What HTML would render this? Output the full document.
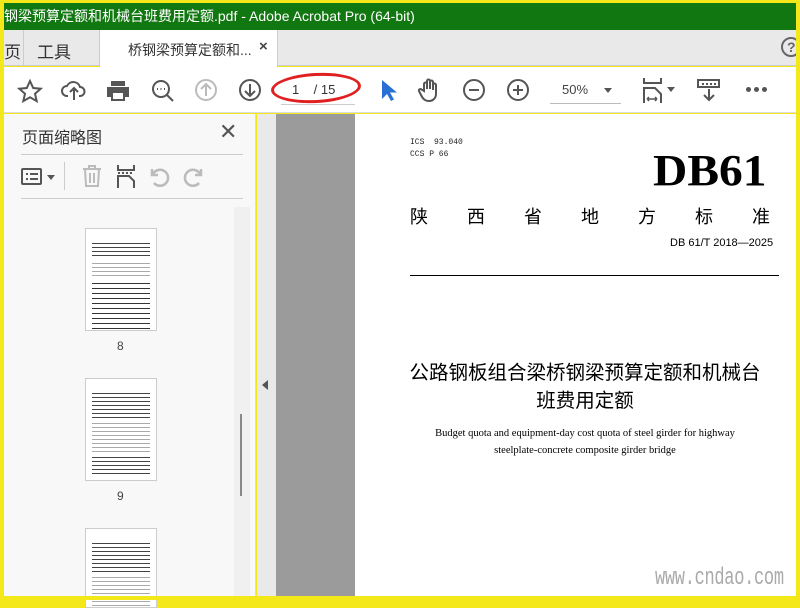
<!DOCTYPE html>
<html><head><meta charset="utf-8"><style>
*{margin:0;padding:0;box-sizing:border-box}
body{width:800px;height:600px;overflow:hidden;background:#f5e81a;position:relative;font-family:"Liberation Sans","Noto Sans CJK SC",sans-serif}
.a{position:absolute}
.ic{position:absolute;stroke:#555;fill:none;stroke-width:2}
.thumb{position:absolute;left:85px;width:72px;height:103px;background:#fff;border:1px solid #ccc}
.thumb .t{position:absolute;background:#222}
</style></head><body>
<div class="a" style="left:4px;top:3px;width:792px;height:27px;background:#117711;color:#fff;font-size:14px;line-height:27px;padding-left:0">钢梁预算定额和机械台班费用定额.pdf - Adobe Acrobat Pro (64-bit)</div>
<div class="a" style="left:4px;top:30px;width:792px;height:36px;background:#e9e9e9;border-bottom:1px solid #ccc"></div>
<div class="a" style="left:4px;top:38px;font-size:17px;color:#333">页</div>
<div class="a" style="left:23px;top:30px;width:1px;height:36px;background:#ccc"></div>
<div class="a" style="left:37px;top:38px;font-size:17px;color:#333">工具</div>
<div class="a" style="left:99px;top:30px;width:179px;height:37px;background:#fff;border-left:1px solid #ccc;border-right:1px solid #ccc"></div>
<div class="a" style="left:128px;top:40px;font-size:14px;color:#333">桥钢梁预算定额和...</div>
<div class="a" style="left:259px;top:38px;font-size:15px;color:#444;font-weight:bold">×</div>
<div class="a" style="left:781px;top:37px;width:20px;height:20px;border:2px solid #666;border-radius:50%;font-size:14px;color:#666;padding-left:4px;line-height:16px;font-weight:bold">?</div>
<div class="a" style="left:4px;top:67px;width:792px;height:46px;background:#fff;border-bottom:1px solid #ddd"></div>
<svg class="ic" style="left:17px;top:79px" width="26" height="24"><path d="M13 2l3.2 7 7.5.7-5.7 5 1.7 7.4L13 18.3 6.3 22.1 8 14.7 2.3 9.7l7.5-.7z"/></svg>
<svg class="ic" style="left:61px;top:78px" width="26" height="24"><path d="M7 18H6a5 5 0 010-10 7 7 0 0113 1 4.5 4.5 0 010 9h-1M13 22V11M9 14l4-4 4 4"/></svg>
<svg class="ic" style="left:105px;top:79px" width="26" height="24"><path fill="#555" stroke="none" d="M6 2h14v5H6zM2 8h22v10h-4v4H6v-4H2zM8 14v6h10v-6z"/></svg>
<svg class="ic" style="left:150px;top:78px" width="26" height="26"><circle cx="11" cy="11" r="8"/><path d="M17 17l6 6"/><path d="M7 11h1M10.5 11h1M14 11h1"/></svg>
<svg class="ic" style="left:194px;top:78px;stroke:#bbb" width="24" height="24"><circle cx="12" cy="12" r="10"/><path d="M12 18V6M7 11l5-5 5 5"/></svg>
<svg class="ic" style="left:238px;top:78px" width="24" height="24"><circle cx="12" cy="12" r="10"/><path d="M12 6v12M7 13l5 5 5-5"/></svg>
<div class="a" style="left:281px;top:104px;width:74px;height:1px;background:#ccc"></div>
<div class="a" style="left:271px;top:73px;width:90px;height:30px;border:3px solid #e02020;border-radius:50%;transform:rotate(-3deg)"></div>
<div class="a" style="left:292px;top:82px;font-size:13px;color:#333">1&nbsp;&nbsp;&nbsp;&nbsp;/ 15</div>
<svg class="a" style="left:379px;top:78px" width="18" height="24"><path fill="#2a6fd6" d="M3 2v19l5-5 4 7 3-1.5-4-7h7z"/></svg>
<svg class="ic" style="left:417px;top:77px" width="26" height="26"><path d="M7 14V7a1.5 1.5 0 013 0v5V4a1.5 1.5 0 013 0v8V5a1.5 1.5 0 013 0v8V8a1.5 1.5 0 013 0v9c0 4-3 7-7 7s-6-2-8-6l-2-4a1.5 1.5 0 012.5-1.5z"/></svg>
<svg class="ic" style="left:462px;top:78px" width="24" height="24"><circle cx="12" cy="12" r="10"/><path d="M7 12h10"/></svg>
<svg class="ic" style="left:506px;top:78px" width="24" height="24"><circle cx="12" cy="12" r="10"/><path d="M7 12h10M12 7v10"/></svg>
<div class="a" style="left:562px;top:82px;font-size:13px;color:#444">50%</div>
<div class="a" style="left:604px;top:88px;border:4px solid transparent;border-top:5px solid #555"></div>
<div class="a" style="left:550px;top:103px;width:71px;height:1px;background:#bbb"></div>
<svg class="ic" style="left:642px;top:77px" width="22" height="26"><path d="M2 1v5h17V1M2 26V11h11l6 6v9"/><path d="M5 22h10M5 22l2-2M5 22l2 2M15 22l-2-2M15 22l-2 2" stroke-width="1.5"/></svg>
<div class="a" style="left:667px;top:87px;border:4px solid transparent;border-top:5px solid #555"></div>
<svg class="ic" style="left:697px;top:79px" width="24" height="24"><rect x="1" y="1" width="21" height="7" fill="#fff"/><path d="M5 5h14" stroke-dasharray="2 2"/><path d="M12 10v11M7 16l5 5 5-5"/></svg>
<div class="a" style="left:746px;top:87px;width:5px;height:5px;border-radius:50%;background:#555;box-shadow:8px 0 #555,16px 0 #555"></div>
<!-- left panel -->
<div class="a" style="left:4px;top:114px;width:252px;height:486px;background:#f8f8f8;border-right:1px solid #ddd"></div>
<div class="a" style="left:22px;top:124px;font-size:16px;color:#333">页面缩略图</div>
<div class="a" style="left:219px;top:119px;font-size:22px;color:#555">✕</div>
<div class="a" style="left:21px;top:154px;width:222px;height:1px;background:#ccc"></div>
<div class="a" style="left:21px;top:198px;width:222px;height:1px;background:#ccc"></div>
<svg class="ic" style="left:21px;top:167px" width="22" height="20"><rect x="1" y="2" width="19" height="15" rx="1"/><path d="M5 7h2M9 7h8M5 12h2M9 12h8"/></svg>
<div class="a" style="left:47px;top:175px;border:4px solid transparent;border-top:5px solid #555"></div>
<div class="a" style="left:64px;top:162px;width:1px;height:28px;background:#ccc"></div>
<svg class="ic" style="left:81px;top:164px;stroke:#bbb" width="22" height="24"><path d="M2 5h18M8 5V2h6v3M4 5l1 17h12l1-17M9 9v10M13 9v10"/></svg>
<svg class="ic" style="left:115px;top:164px" width="22" height="24"><path d="M3 1v5h16V1M3 24V12h11l5 5v7" /><path d="M3 9h16" stroke-dasharray="2 2"/></svg>
<svg class="ic" style="left:148px;top:165px;stroke:#bbb;stroke-width:2.5" width="24" height="24"><path d="M6 18a8 8 0 10-1-9M4 4v6h6"/></svg>
<svg class="ic" style="left:181px;top:165px;stroke:#bbb;stroke-width:2.5" width="24" height="24"><path d="M18 18a8 8 0 111-9M20 4v6h-6"/></svg>
<div class="a" style="left:234px;top:207px;width:16px;height:393px;background:#f0f0f0"></div>
<div class="a" style="left:240px;top:414px;width:2px;height:82px;background:#888"></div>
<div class="thumb" style="top:228px"><div class="t" style="left:6px;top:14px;width:58px;height:16px;background:repeating-linear-gradient(#444 0 1px,#fff 1px 4px)"></div><div class="t" style="left:6px;top:34px;width:58px;height:14px;background:repeating-linear-gradient(#aaa 0 1px,#fff 1px 4px)"></div><div class="t" style="left:6px;top:54px;width:58px;height:46px;background:repeating-linear-gradient(#333 0 1px,#fff 1px 5px)"></div></div>
<div class="a" style="left:117px;top:339px;font-size:12px;color:#444">8</div>
<div class="thumb" style="top:378px"><div class="t" style="left:6px;top:14px;width:58px;height:26px;background:repeating-linear-gradient(#444 0 1px,#fff 1px 4px)"></div><div class="t" style="left:6px;top:44px;width:58px;height:30px;background:repeating-linear-gradient(#aaa 0 1px,#fff 1px 4px)"></div><div class="t" style="left:6px;top:78px;width:58px;height:18px;background:repeating-linear-gradient(#444 0 1px,#fff 1px 4px)"></div></div>
<div class="a" style="left:117px;top:489px;font-size:12px;color:#444">9</div>
<div class="thumb" style="top:528px;height:80px"><div class="t" style="left:6px;top:14px;width:58px;height:30px;background:repeating-linear-gradient(#444 0 1px,#fff 1px 4px)"></div><div class="t" style="left:6px;top:48px;width:58px;height:30px;background:repeating-linear-gradient(#aaa 0 1px,#fff 1px 4px)"></div></div>
<!-- viewer -->
<div class="a" style="left:257px;top:114px;width:19px;height:486px;background:#e9e9e9"></div>
<div class="a" style="left:262px;top:380px;border:5px solid transparent;border-right:6px solid #555;border-left:0"></div>
<div class="a" style="left:276px;top:114px;width:79px;height:486px;background:#9b9b9b"></div>
<div class="a" style="left:355px;top:114px;width:441px;height:482px;background:#fff"></div>
<div class="a" style="left:410px;top:137px;font-size:8px;font-family:'Liberation Mono',monospace;color:#222;line-height:12px">ICS&nbsp; 93.040<br>CCS P 66</div>
<div class="a" style="left:653px;top:145px;font-size:44px;font-weight:bold;font-family:'Liberation Serif',serif;color:#000;line-height:52px;transform:scaleX(1.08);transform-origin:left">DB61</div>
<div class="a" style="left:410px;top:203px;width:360px;display:flex;justify-content:space-between;font-size:18px;color:#000"><span>陕</span><span>西</span><span>省</span><span>地</span><span>方</span><span>标</span><span>准</span></div>
<div class="a" style="left:670px;top:237px;font-size:11px;color:#000">DB 61/T 2018—2025</div>
<div class="a" style="left:410px;top:275px;width:369px;height:1px;background:#000"></div>
<div class="a" style="left:385px;top:359px;width:400px;text-align:center;font-size:19.5px;line-height:28px;color:#000">公路钢板组合梁桥钢梁预算定额和机械台<br>班费用定额</div>
<div class="a" style="left:400px;top:425px;width:370px;text-align:center;font-size:10.5px;line-height:17px;font-family:'Liberation Serif',serif;color:#000">Budget quota and equipment-day cost quota of steel girder for highway<br>steelplate-concrete composite girder bridge</div>
<div class="a" style="left:655px;top:566px;font-size:17px;font-family:'Liberation Mono',monospace;color:#aaa;letter-spacing:-0.3px;transform:scaleY(1.4);transform-origin:top left">www.cndao.com</div>
<div class="a" style="left:0;top:0;width:800px;height:600px;border:3px solid #f5e81a;border-width:3px 4px 4px 4px"></div>
</body></html>
